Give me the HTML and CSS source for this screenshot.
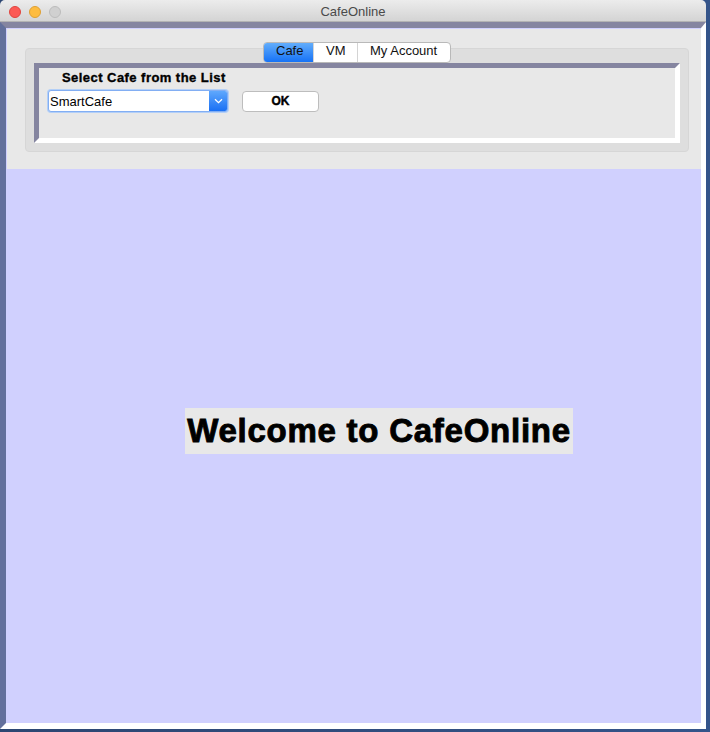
FILE: index.html
```html
<!DOCTYPE html>
<html>
<head>
<meta charset="utf-8">
<title>CafeOnline</title>
<link rel="stylesheet" href="styles.css">
</head>
<body>
<div class="window">
  <div class="titlebar">
    <div class="lights">
      <span class="light red"></span>
      <span class="light yellow"></span>
      <span class="light gray"></span>
    </div>
    <div class="title">CafeOnline</div>
  </div>
  <div class="frame">
    <div class="north">
      <div class="tabbox">
        <div class="tabs">
          <div class="tab active">Cafe</div>
          <div class="tab">VM</div>
          <div class="tab">My Account</div>
        </div>
        <div class="bevel">
          <div class="caption">Select Cafe from the List</div>
          <div class="row">
            <div class="combo">
              <span class="combo-text">SmartCafe</span>
              <span class="combo-btn">
                <svg width="9" height="6" viewBox="0 0 9 6"><path d="M1 1.2 L4.5 4.6 L8 1.2" fill="none" stroke="#fff" stroke-width="1.3"/></svg>
              </span>
            </div>
            <div class="okbtn">OK</div>
          </div>
        </div>
      </div>
    </div>
    <div class="center">
      <div class="welcome">Welcome to CafeOnline</div>
    </div>
  </div>
</div>
</body>
</html>
```

FILE: styles.css
```css
html, body {
  margin: 0;
  padding: 0;
}
body {
  width: 710px;
  height: 732px;
  background: linear-gradient(90deg, #2c4672 0%, #34548a 100%);
  font-family: "Liberation Sans", Arial, sans-serif;
  overflow: hidden;
}
.window {
  width: 706px;
  height: 729px;
  display: flex;
  flex-direction: column;
  border-radius: 5px 5px 0 0;
  overflow: hidden;
}
.titlebar {
  height: 22px;
  flex: none;
  background: linear-gradient(#ececec, #d4d4d4);
  border-bottom: 1px solid #b3b3b3;
  box-sizing: border-box;
  display: flex;
  align-items: center;
}
.lights {
  display: flex;
  gap: 8px;
  padding-left: 9px;
  margin-top: 2px;
}
.light {
  width: 12px;
  height: 12px;
  border-radius: 50%;
  box-sizing: border-box;
}
.light.red { background: #fc5a55; border: 1px solid #e0443e; }
.light.yellow { background: #fdbc40; border: 1px solid #dea033; }
.light.gray { background: #d0d0d0; border: 1px solid #bcbcbc; }
.title {
  flex: 1;
  text-align: center;
  font-size: 13px;
  color: #4a4a4a;
  margin-left: -61px;
  margin-top: 1px;
}
.frame {
  flex: 1;
  display: flex;
  flex-direction: column;
  border-style: solid;
  border-width: 6px 5px 6px 6px;
  border-color: #8585a0 #ffffff #ffffff #63709c;
  background: #d0d0fe;
}
.north {
  height: 140px;
  margin: 1px 0 0 1px;
  background: #e8e8e8;
  flex: none;
  display: flex;
  flex-direction: column;
}
.tabbox {
  margin: 19px 0 0 18px;
  width: 664px;
  height: 104px;
  box-sizing: border-box;
  background: #dedede;
  border: 1px solid #d6d6d6;
  border-radius: 4px;
  padding: 0 8px 8px 8px;
  display: flex;
  flex-direction: column;
}
.tabs {
  align-self: center;
  margin-top: -7px;
  height: 19px;
  display: flex;
  background: #fff;
  border: 1px solid #b9b9b9;
  border-radius: 4px;
  overflow: hidden;
  font-size: 13px;
  color: #111;
}
.tab {
  height: 19px;
  box-sizing: border-box;
  padding: 3px 12px 0;
  line-height: 10px;
  border-left: 1px solid #d4d4d4;
}
.tab:first-child { border-left: none; }
.tab.active {
  background: linear-gradient(#62adfb, #1672f6);
  width: 49px;
}
.tabs .tab:nth-child(2) { width: 44px; }
.tabs .tab:nth-child(3) { width: 93px; }
.bevel {
  margin-top: 0;
  height: 80px;
  box-sizing: border-box;
  border-style: solid;
  border-width: 5px;
  border-color: #8585a0 #ffffff #ffffff #8585a0;
  background: #e8e8e8;
  padding: 2px 0 0 9px;
}
.caption {
  margin-left: 14px;
  font-size: 13px;
  font-weight: bold;
  letter-spacing: 0.45px;
  line-height: 16px;
  color: #000;
  -webkit-text-stroke: 0.35px #000;
}
.row {
  margin-top: 4px;
  display: flex;
  align-items: flex-start;
}
.combo {
  width: 180px;
  height: 22px;
  box-sizing: border-box;
  background: #fff;
  border: 1px solid #82aef3;
  border-radius: 3px;
  box-shadow: 0 0 0 1px #b3cff7;
  display: flex;
  align-items: center;
  overflow: hidden;
}
.combo-text {
  flex: 1;
  font-size: 13px;
  color: #000;
  padding-left: 1px;
}
.combo-btn {
  width: 18px;
  height: 20px;
  background: linear-gradient(#5fa8fd, #1a70f4);
  display: flex;
  align-items: center;
  justify-content: center;
}
.okbtn {
  margin: 1px 0 0 14px;
  width: 77px;
  height: 21px;
  box-sizing: border-box;
  background: #fff;
  border: 1px solid #bdbdbd;
  border-radius: 4px;
  text-align: center;
  font-size: 12px;
  font-weight: bold;
  line-height: 18px;
  color: #000;
  -webkit-text-stroke: 0.4px #000;
}
.center {
  flex: 1;
  padding: 239px 0 0 179px;
  box-sizing: border-box;
}
.welcome {
  width: 388px;
  height: 46px;
  background: #e8e8e8;
  font-size: 33px;
  font-weight: bold;
  letter-spacing: 0.75px;
  line-height: 46px;
  text-align: center;
  color: #000;
  -webkit-text-stroke: 0.9px #000;
}
```
